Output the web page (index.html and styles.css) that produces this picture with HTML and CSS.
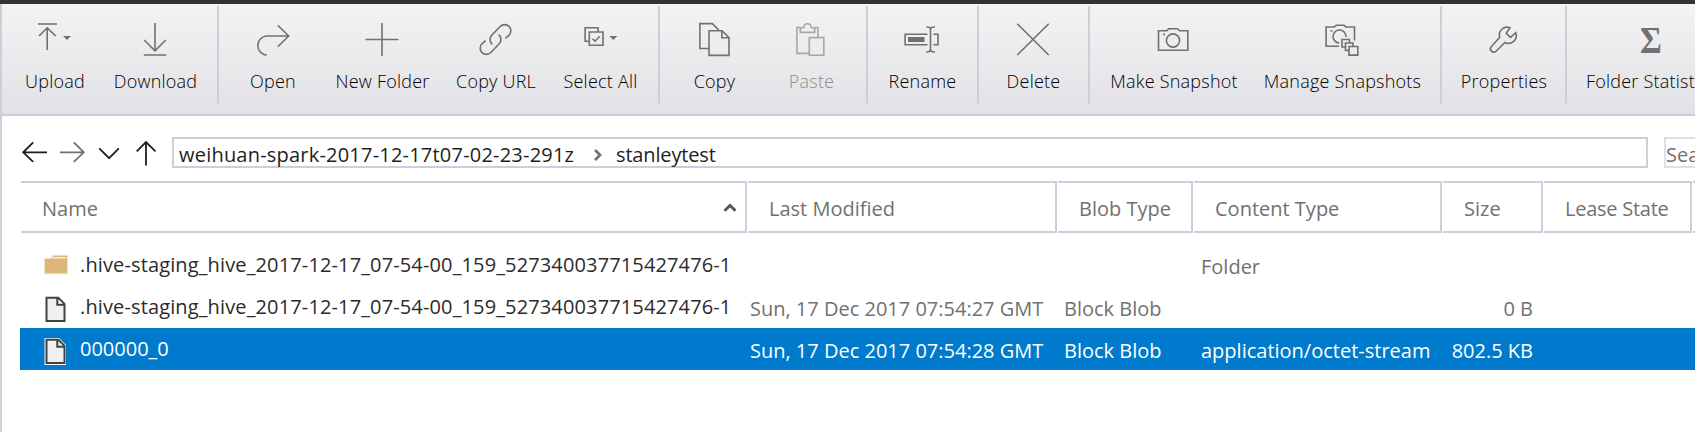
FILE: index.html
```html
<!DOCTYPE html>
<html lang="en">
<head>
<meta charset="utf-8">
<title>Storage Explorer</title>
<link rel="stylesheet" href="styles.css">
</head>
<body>
<div class="titlebar"></div>
<div class="panel">
  <div class="toolbar">
    <div class="group g-transfer">
      <div class="tool t-upload">
        <svg class="icon" viewBox="33 18 44 40"><path d="M38 24h19M47.2 50V28M39 36l8.2-8.2 8.6 8.2"/><path class="solid" d="M63 36h8l-4 4z"/></svg>
        <span class="label">Upload</span>
      </div>
      <div class="tool t-download">
        <svg class="icon" viewBox="133.500 18 44 40"><path d="M154.500 23v28M143.700 40l10.800 10.800L165.200 40M143.300 55h22.500"/></svg>
        <span class="label">Download</span>
      </div>
    </div>
    <div class="group g-edit">
      <div class="tool t-open">
        <svg class="icon" viewBox="251 18 44 40"><path d="M288.500 36H266a9.600 9.600 0 0 0 0 19h.7M277.700 25.200L288.700 36l-11 10.700"/></svg>
        <span class="label">Open</span>
      </div>
      <div class="tool t-new">
        <svg class="icon" viewBox="360.500 18 44 40"><path d="M365 39.500h33M381.500 23v33"/></svg>
        <span class="label">New Folder</span>
      </div>
      <div class="tool t-url">
        <svg class="icon" viewBox="474 18 44 40"><path d="M492.300 44.300a6.300 6.300 0 0 1-.8-8.800l8.700-9a6.200 6.200 0 0 1 8.900 8.700l-3.700 3.200M498.700 34.700a6.300 6.300 0 0 1 .8 8.800l-8.700 9a6.200 6.200 0 0 1-8.900-8.700l3.700-3.200"/></svg>
        <span class="label">Copy URL</span>
      </div>
      <div class="tool t-select">
        <svg class="icon" viewBox="578.500 18 44 40"><path d="M588.500 41.200H584.600V27.700h13v4M588.800 32H602.500v13.200H588.800zM592 38.800l2.700 2.400 4.500-5"/><path class="solid" d="M608.800 36h8l-4 4z"/></svg>
        <span class="label">Select All</span>
      </div>
    </div>
    <div class="group g-copy">
      <div class="tool t-copy">
        <svg class="icon" viewBox="692.500 18 44 40"><path d="M708 48.500H699.400V23.600h12.400l6.500 6.400M708.500 30.700H721.500l7 7V55.400h-20zM721.300 31v6.700h7"/></svg>
        <span class="label">Copy</span>
      </div>
      <div class="tool t-paste disabled">
        <svg class="icon" viewBox="789.500 18 44 40"><path d="M799.800 27.500h-3.400V53.400H808M814 27.500h3.400V37M799.800 27.700h3.400c.6-5.300 7-5.300 7.600 0h3.400v4.700h-14.400zM808.800 37.600h14.500v17.700h-14.500z"/></svg>
        <span class="label">Paste</span>
      </div>
    </div>
    <div class="group g-rename">
      <div class="tool">
        <svg class="icon" viewBox="900.500 18 44 40"><path d="M928 34.200H905.600v10.500H928M934 34.200h4.500v10.500H934M931 29v21M926.800 27c2 0 4.200.5 4.200 2.200 0-1.700 2.200-2.200 4.500-2.200M926.800 52c2 0 4.200-.5 4.200-2.200 0 1.700 2.200 2.200 4.500 2.200"/><path class="solid" d="M908.500 37H925v5H908.500z"/></svg>
        <span class="label">Rename</span>
      </div>
    </div>
    <div class="group g-delete">
      <div class="tool">
        <svg class="icon" viewBox="1011.500 18 44 40"><path d="M1017.800 23.800l31.400 31.200M1049.200 23.800L1017.800 55"/></svg>
        <span class="label">Delete</span>
      </div>
    </div>
    <div class="group g-snap">
      <div class="tool t-make">
        <svg class="icon" viewBox="1152 18 44 40"><path d="M1158.500 30.700h8.300l1.800-1.900h9l1.800 1.900h8.400v19.600h-29.300z"/><circle cx="1173" cy="40.500" r="6.600"/><path class="solid" d="M1163 33.500h2v1.700h-2z"/></svg>
        <span class="label">Make Snapshot</span>
      </div>
      <div class="tool t-manage">
        <svg class="icon" viewBox="1320.500 18 44 40"><path d="M1338.500 46.200H1325.600V27h8.200l1.800-1.700h8l1.800 1.700h8.600V40.500M1338.700 43a6.500 6.500 0 1 1 6.800-6M1345 47h-3.500v-7.500h7.500v3M1348.300 50.500h-3.300v-7.500h7.500v3M1348.500 46.500h8.800v8.600h-8.800z"/><path class="solid" d="M1330 30h2v1.600h-2z"/></svg>
        <span class="label">Manage Snapshots</span>
      </div>
    </div>
    <div class="group g-props">
      <div class="tool">
        <svg class="icon" viewBox="1482.500 18 44 40"><path d="M1510.500 27.800a7.700 7.700 0 0 0-10.300 9.400l-8.200 9.300a3.200 3.200 0 0 0 4.600 4.700l8.800-8.700a7.900 7.900 0 0 0 10.900-9.800l-5.300 4.600-4.300-4z"/></svg>
        <span class="label">Properties</span>
      </div>
    </div>
    <div class="group g-stats">
      <div class="tool">
        <span class="icon sigma">Σ</span>
        <span class="label">Folder Statistics</span>
      </div>
    </div>
  </div>

  <div class="navbar">
    <svg class="arrows" viewBox="20 136 140 34"><path d="M47 152.300H23.500M33.200 142.300l-10 10 10 9.500M99.300 148.300l9.800 9.800 9.700-9.800M146 165.500V142M136.700 151.300l9.300-9.300 9.500 9.300"/><path class="dim" d="M60 152.300h23.500M73.800 142.300l10 10-10 9.500"/></svg>
    <div class="address">
      <span class="crumb long">weihuan-spark-2017-12-17t07-02-23-291z</span>
      <svg class="chev" viewBox="0 0 10 14"><path d="M2 2l5 5-5 5"/></svg>
      <span class="crumb">stanleytest</span>
    </div>
    <div class="search">Search</div>
  </div>

  <div class="grid head">
    <div class="th">Name<svg class="sort" viewBox="0 0 14 10"><path d="M1.500 7.800L7 2.500l5.500 5.300"/></svg></div>
    <div class="th">Last Modified</div>
    <div class="th">Blob Type</div>
    <div class="th">Content Type</div>
    <div class="th">Size</div>
    <div class="th lease">Lease State</div>
    <div class="th"></div>
  </div>

  <div class="rows">
    <div class="grid row">
      <div class="name"><svg class="file" viewBox="0 0 26 30"><path class="folder" d="M1.500 5.500h6.500l2-3.200h14.500v18.500h-23z"/><path class="flap" d="M8.800 5.500l1-1.600h13v1.600z"/></svg><span class="long-name">.hive-staging_hive_2017-12-17_07-54-00_159_527340037715427476-1</span></div>
      <div class="td"></div><div class="td"></div><div class="td type">Folder</div><div class="td num"></div>
    </div>
    <div class="grid row">
      <div class="name"><svg class="file" viewBox="0 0 26 30"><path class="page" d="M3.500 2.700h11.800l6.200 6.200v17h-18zM14.300 2.700v7h7"/></svg><span class="long-name">.hive-staging_hive_2017-12-17_07-54-00_159_527340037715427476-1</span></div>
      <div class="td">Sun, 17 Dec 2017 07:54:27 GMT</div><div class="td blob">Block Blob</div><div class="td"></div><div class="td num">0 B</div>
    </div>
    <div class="grid row selected">
      <div class="name"><svg class="file" viewBox="0 0 26 30"><path class="halo" d="M1.500 1h14.500l7 7v20h-21.500z"/><path class="page" d="M3.500 2.700h11.800l6.200 6.200v17h-18zM14.300 2.700v7h7"/></svg><span>000000_0</span></div>
      <div class="td">Sun, 17 Dec 2017 07:54:28 GMT</div><div class="td blob">Block Blob</div><div class="td type">application/octet-stream</div><div class="td num">802.5 KB</div>
    </div>
  </div>
</div>
</body>
</html>
```
FILE: styles.css
```css
* { box-sizing: border-box; }
body {
  margin: 0;
  height: 432px;
  overflow: hidden;
  background: #fff;
  font: 20px "Open Sans", "Noto Sans", sans-serif;
  color: #1e1e1e;
}
svg { display: block; flex: none; fill: none; }
.titlebar { height: 4px; background: #333; }
.panel { height: 428px; border-left: 2px solid #cccedb; }

.toolbar {
  display: flex;
  height: 112px;
  padding-top: 2px;
  overflow: hidden;
  border-bottom: 2px solid #cccedb;
  background: linear-gradient(#f3f3f3, #e2e1e6);
}
.group {
  display: flex;
  flex: none;
  height: 98px;
  border-right: 2px solid #cccedb;
}
.g-transfer { width: 217px; padding-left: 11px; }
.g-edit { width: 441px; padding-left: 10px; }
.g-copy { width: 208px; padding-left: 3px; }
.g-rename { width: 111px; justify-content: center; }
.g-delete { width: 111px; justify-content: center; }
.g-snap { width: 352px; padding-left: 8px; }
.g-props { width: 125px; padding-left: 1px; justify-content: center; }
.g-stats { padding-left: 19px; border-right: 0; }
.tool {
  display: flex;
  flex-direction: column;
  align-items: center;
  padding-top: 12px;
}
.t-upload { width: 84px; }
.t-download { width: 117px; }
.t-open { width: 88px; }
.t-new { width: 131px; }
.t-url { width: 96px; }
.t-select { width: 113px; }
.t-copy { width: 103px; }
.t-paste { width: 91px; }
.t-make { width: 152px; }
.t-manage { width: 185px; }
.icon {
  width: 44px;
  height: 40px;
  stroke: #717171;
  stroke-width: 1.6;
}
.icon .solid { fill: #717171; stroke: none; }
.disabled .icon { stroke: #a7a7a7; }
.sigma {
  font: bold 37px/46px "Liberation Serif", serif;
  color: #717171;
  text-align: center;
  transform: scaleX(0.9);
}
.label {
  margin-top: 11px;
  font-size: 18px;
  font-weight: 300;
  line-height: 24px;
  letter-spacing: 0.22px;
  white-space: nowrap;
  color: #000;
}
.disabled .label { color: #8e8e8e; }

.navbar {
  display: flex;
  height: 65px;
  padding: 20px 0 0 18px;
  overflow: hidden;
}
.arrows { width: 140px; height: 34px; stroke: #1e1e1e; stroke-width: 1.8; }
.arrows .dim { stroke: #717171; }
.address {
  display: flex;
  flex: none;
  width: 1476px;
  height: 31px;
  margin: 1px 16px 0 12px;
  padding-left: 5px;
  border: 2px solid #cccedb;
}
.crumb { line-height: 32px; white-space: nowrap; letter-spacing: -0.15px; }
.crumb.long { width: 414px; letter-spacing: 0.21px; }
.chev { width: 10px; height: 14px; margin: 9px 13px 0 0; stroke: #717171; stroke-width: 2.8; }
.search {
  flex: none;
  width: 200px;
  height: 31px;
  margin-top: 1px;
  border: 2px solid #dddee8;
  color: #717171;
  line-height: 32px;
}

.grid {
  display: grid;
  grid-template-columns: 727px 310px 136px 249px 101px 149px 140px;
  margin-left: 18px;
}
.head { height: 52px; }
.th {
  display: flex;
  justify-content: space-between;
  height: 52px;
  margin-left: 1px;
  padding: 0 8px 0 21px;
  border: 2px solid #cccedb;
  border-left: 0;
  line-height: 52px;
  white-space: nowrap;
  color: #717171;
}
.lease { letter-spacing: -0.25px; }
.sort { width: 14px; height: 10px; margin-top: 20px; stroke: #555; stroke-width: 2.8; }

.rows { padding-top: 11px; }
.row { height: 42px; line-height: 42px; white-space: nowrap; }
.name { display: flex; padding-left: 23px; }
.name span { color: #2b2b2b; }
.name .long-name { letter-spacing: 0.13px; }
.file { width: 26px; height: 30px; margin: 9px 11px 0 0; }
.folder { fill: #dcb67a; stroke: #f2e3c9; stroke-width: 1; }
.flap { fill: #faf3e6; }
.page { fill: #f0eff1; stroke: #424242; stroke-width: 2; }
.halo { fill: #f6f6f6; }
.td { height: 42px; padding: 2px 0 0 3px; color: #717171; }
.td.blob { padding-left: 7px; }
.td.type { padding-left: 8px; }
.td.num { padding-right: 10px; padding-left: 0; text-align: right; }
.selected { background: #007acc; }
.selected .td, .selected .name span { color: #fff; }
```
